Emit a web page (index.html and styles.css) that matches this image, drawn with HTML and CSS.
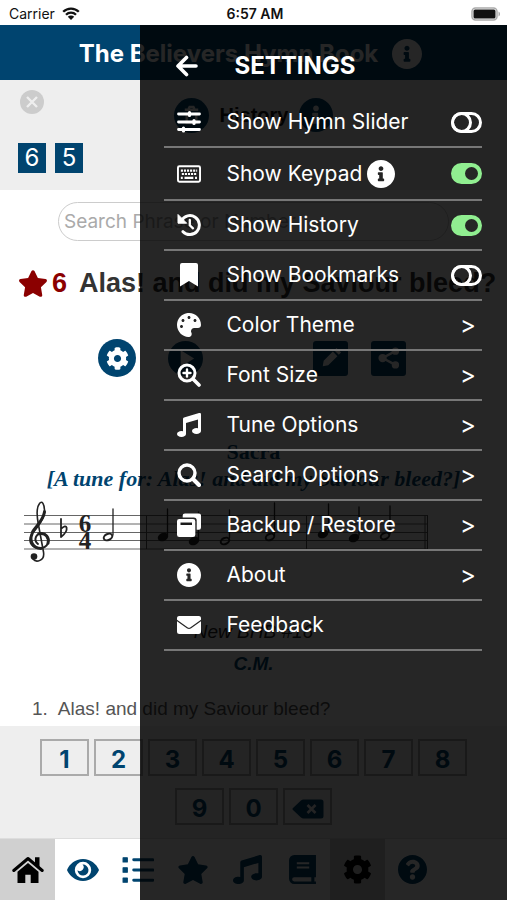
FILE: index.html
```html
<!DOCTYPE html>
<html lang="en">
<head>
<meta charset="utf-8">
<meta name="viewport" content="width=device-width, initial-scale=1">
<title>The Believers Hymn Book</title>
<link rel="stylesheet" href="styles.css">
</head>
<body>
<svg class="sprite" aria-hidden="true">
  <symbol id="cog" viewBox="0 0 512 512"><path d="M487.4 315.7l-42.6-24.6c4.3-23.2 4.3-47 0-70.2l42.6-24.6c4.9-2.8 7.1-8.6 5.5-14-11.1-35.6-30-67.8-54.7-94.6-3.8-4.1-10-5.1-14.8-2.3L380.8 110c-17.9-15.4-38.5-27.3-60.8-35.1V25.8c0-5.6-3.9-10.5-9.4-11.7-36.7-8.2-74.3-7.8-109.2 0-5.5 1.2-9.4 6.1-9.4 11.7V75c-22.2 7.9-42.8 19.8-60.8 35.1L88.7 85.5c-4.9-2.8-11-1.9-14.8 2.3-24.7 26.7-43.6 58.9-54.7 94.6-1.7 5.4.6 11.2 5.5 14L67.3 221c-4.3 23.2-4.3 47 0 70.2l-42.6 24.6c-4.9 2.8-7.1 8.6-5.5 14 11.1 35.6 30 67.8 54.7 94.6 3.8 4.1 10 5.1 14.8 2.3l42.6-24.6c17.9 15.4 38.5 27.3 60.8 35.1v49.2c0 5.6 3.9 10.5 9.4 11.7 36.7 8.2 74.3 7.8 109.2 0 5.5-1.2 9.4-6.1 9.4-11.7v-49.2c22.2-7.9 42.8-19.8 60.8-35.1l42.6 24.6c4.9 2.8 11 1.9 14.8-2.3 24.7-26.7 43.6-58.9 54.7-94.6 1.5-5.5-.7-11.3-5.6-14.1zM256 336c-44.1 0-80-35.9-80-80s35.9-80 80-80 80 35.9 80 80-35.9 80-80 80z"/></symbol>
  <symbol id="star" viewBox="0 0 576 512"><path d="M259.3 17.8L194 150.2 47.9 171.5c-26.2 3.8-36.7 36.1-17.7 54.6l105.7 103-25 145.5c-4.5 26.3 23.2 46 46.4 33.7L288 439.6l130.7 68.7c23.2 12.2 50.9-7.4 46.4-33.7l-25-145.5 105.7-103c19-18.5 8.5-50.8-17.7-54.6L382 150.2 316.7 17.8c-11.7-23.6-45.6-23.9-57.4 0z"/></symbol>
  <symbol id="info" viewBox="8 8 496 496"><path d="M256 8C119.043 8 8 119.083 8 256c0 136.997 111.043 248 248 248s248-111.003 248-248C504 119.083 392.957 8 256 8zm0 110c23.196 0 42 18.804 42 42s-18.804 42-42 42-42-18.804-42-42 18.804-42 42-42zm56 254c0 6.627-5.373 12-12 12h-88c-6.627 0-12-5.373-12-12v-24c0-6.627 5.373-12 12-12h12v-64h-12c-6.627 0-12-5.373-12-12v-24c0-6.627 5.373-12 12-12h64c6.627 0 12 5.373 12 12v100h12c6.627 0 12 5.373 12 12v24z"/></symbol>
  <symbol id="help" viewBox="8 8 496 496"><path d="M504 256c0 136.997-111.043 248-248 248S8 392.997 8 256C8 119.083 119.043 8 256 8s248 111.083 248 248zM262.655 90c-54.497 0-89.255 22.957-116.549 63.758-3.536 5.286-2.353 12.415 2.715 16.258l34.699 26.31c5.205 3.947 12.621 3.008 16.665-2.122 17.864-22.658 30.113-35.797 57.303-35.797 20.429 0 45.698 13.148 45.698 32.958 0 14.976-12.363 22.667-32.534 33.976C247.128 238.528 216 254.941 216 296v4c0 6.627 5.373 12 12 12h56c6.627 0 12-5.373 12-12v-1.333c0-28.462 83.186-29.647 83.186-106.667 0-58.002-60.165-102-116.531-102zM256 338c-25.365 0-46 20.635-46 46 0 25.364 20.635 46 46 46s46-20.636 46-46c0-25.365-20.635-46-46-46z"/></symbol>
  <symbol id="music" viewBox="0 0 512 512"><path d="M470.38 1.51L150.41 96A32 32 0 0 0 128 126.51v261.41A139 139 0 0 0 96 384c-53 0-96 28.66-96 64s43 64 96 64 96-28.66 96-64V214.32l256-75v184.61a138.4 138.4 0 0 0-32-3.93c-53 0-96 28.66-96 64s43 64 96 64 96-28.65 96-64V32a32 32 0 0 0-41.62-30.49z"/></symbol>
  <symbol id="palette" viewBox="0 0 512 512"><path d="M204.3 5C104.9 24.4 24.8 104.3 5.2 203.4c-37 187 131.7 326.4 258.8 306.7 41.2-6.4 61.4-54.6 42.5-91.7-23.1-45.4 9.9-98.4 60.9-98.4h79.7c35.8 0 64.8-29.6 64.9-65.3C511.5 97.1 368.1-26.9 204.3 5zM96 320c-17.7 0-32-14.3-32-32s14.3-32 32-32 32 14.3 32 32-14.3 32-32 32zm32-128c-17.7 0-32-14.3-32-32s14.3-32 32-32 32 14.3 32 32-14.3 32-32 32zm128-64c-17.7 0-32-14.3-32-32s14.3-32 32-32 32 14.3 32 32-14.3 32-32 32zm128 64c-17.7 0-32-14.3-32-32s14.3-32 32-32 32 14.3 32 32-14.3 32-32 32z"/></symbol>
  <symbol id="bookmark" viewBox="0 0 24 24"><path d="M3 2a2 2 0 0 1 2-2h14a2 2 0 0 1 2 2V23.500L12 18 3 23.500z"/></symbol>
  <symbol id="sliders" viewBox="0 0 24 24"><path d="M1.500 4h21M1.500 12h21M1.500 19.500h21" stroke="currentColor" stroke-width="2.800" stroke-linecap="round"/><path d="M12.500 2.500v3M17 10.500v3M6.500 18v3" stroke="currentColor" stroke-width="3.200" stroke-linecap="round"/></symbol>
  <symbol id="keyboard" viewBox="0.500 1 25 18"><rect x="1.500" y="2" width="23" height="16" rx="1.500" fill="none" stroke="currentColor" stroke-width="2"/><path d="M4.500 6.500h17M5.500 10h15.500" stroke="currentColor" stroke-width="2.200" stroke-dasharray="2.200 1"/><path d="M4.500 14h2M8.300 14h9.200M19.300 14h2" stroke="currentColor" stroke-width="2.200"/></symbol>
  <symbol id="history" viewBox="0 0 24 24"><path d="M4.500 7.500A9.500 9.500 0 1 1 6 18.700" fill="none" stroke="currentColor" stroke-width="3" stroke-linecap="round"/><path d="M1 1.500v8.700h8.700z" stroke="currentColor" stroke-linejoin="round"/><path d="M12.800 7v5.300l3.200 3" fill="none" stroke="currentColor" stroke-width="2.300" stroke-linecap="round"/></symbol>
  <symbol id="zoom-in" viewBox="0 0 24 24"><circle cx="10" cy="10" r="8" fill="none" stroke="currentColor" stroke-width="3"/><path d="M16 16l6 6" stroke="currentColor" stroke-width="3.600" stroke-linecap="round"/><path d="M10 6.500v7M6.500 10h7" stroke="currentColor" stroke-width="2.400" stroke-linecap="round"/></symbol>
  <symbol id="search" viewBox="0 0 24 24"><circle cx="10" cy="10" r="8" fill="none" stroke="currentColor" stroke-width="3.400"/><path d="M16 16l6 6" stroke="currentColor" stroke-width="4" stroke-linecap="round"/></symbol>
  <symbol id="restore" viewBox="0 0 24 24"><path d="M8 .500h13.500A2.300 2.300 0 0 1 24 3v11.500a2.300 2.300 0 0 1-2.500 2.300H19.700V7.500a3 3 0 0 0-3-3H5.700V3A2.300 2.300 0 0 1 8 .500z"/><path fill-rule="evenodd" d="M2.300 6h13.700a2.300 2.300 0 0 1 2.300 2.300V21.700a2.300 2.300 0 0 1-2.300 2.300H2.300a2.300 2.300 0 0 1-2.300-2.300V8.300a2.300 2.300 0 0 1 2.300-2.300zM3.500 9.500v2.500h11.500V9.500z"/></symbol>
  <symbol id="mail" viewBox="0 0 24 24"><path d="M2.500 3h19A2.300 2.300 0 0 1 24 5.500v1.300l-10.500 7.500a2.500 2.500 0 0 1-3 0L0 6.800V5.500A2.300 2.300 0 0 1 2.500 3z"/><path d="M0 8.300l9.800 7a3.800 3.800 0 0 0 4.400 0L24 8.300v10.200A2.500 2.500 0 0 1 21.500 21h-19A2.500 2.500 0 0 1 0 18.500z"/></symbol>
  <symbol id="back" viewBox="0 0 22 22"><path d="M20 11H3M10.500 2.500L2 11l8.500 8.500" fill="none" stroke="currentColor" stroke-width="3.600" stroke-linecap="round" stroke-linejoin="round"/></symbol>
  <symbol id="home" viewBox="0 0 32 28"><path d="M1.800 14.500L16 2.500l14.200 12" fill="none" stroke="currentColor" stroke-width="3" stroke-linecap="round" stroke-linejoin="round"/><path d="M23 1.200h4.500V12L23 8z"/><path d="M5.500 15.800L16 7l10.500 8.800V27h-7.800v-8.300h-5.400V27H5.500z"/></symbol>
  <symbol id="eye" viewBox="0 0 32 24"><path fill-rule="evenodd" d="M16 1C8 1 2.500 6.500.3 11.200a2 2 0 0 0 0 1.600C2.500 17.500 8 23 16 23s13.500-5.500 15.700-10.200a2 2 0 0 0 0-1.600C29.500 6.500 24 1 16 1zm0 2.800a8.200 8.200 0 1 1 0 16.400 8.200 8.200 0 0 1 0-16.400z"/><path d="M15.500 6.600a5.500 5.500 0 1 1-5 5.700 3.800 3.800 0 0 0 5-5.700z"/></symbol>
  <symbol id="list" viewBox="0 0 30 26"><path d="M1 1.500h4v4H1zM1 11h4v4H1zM1 20.500h4v4H1z" stroke="currentColor" stroke-linejoin="round"/><path d="M11 3.500h18M11 13h18M11 22.500h18" stroke="currentColor" stroke-width="2.800" stroke-linecap="round"/></symbol>
  <symbol id="book" viewBox="0 0 26 28"><path fill-rule="evenodd" d="M5 0h21v21.500h-1.500v4H26V28H5a5 5 0 0 1-5-5V5a5 5 0 0 1 5-5zM5 21.500a2 2 0 0 0 0 4h16.500v-4zM7.500 7v2h12V7zm0 4v2h12v-2z"/></symbol>
  <symbol id="delete" viewBox="0 0 32 20"><path fill-rule="evenodd" d="M1 9L9 1.500A4 4 0 0 1 12 .5h17A2.500 2.500 0 0 1 31.500 3v14a2.500 2.500 0 0 1-2.500 2.500H12a4 4 0 0 1-3-1L1 11a1.400 1.400 0 0 1 0-2z"/><path d="M15.500 6l8 8m0-8l-8 8" stroke="#eee" stroke-width="2.600"/></symbol>
</svg>

<div class="app">
  <div class="status">
    <span class="carrier">Carrier
      <svg class="wifi" viewBox="0 0 18 13"><path d="M1.200 4.800a11 11 0 0 1 15.600 0M4 7.800a7 7 0 0 1 10 0" fill="none" stroke="currentColor" stroke-width="2.300"/><path d="M5.800 9.700a4.600 4.600 0 0 1 6.400 0L9 13z"/></svg>
    </span>
    <time>6:57 AM</time>
    <svg class="battery" viewBox="0 0 30 14"><rect x="1" y="1" width="25" height="12" rx="3.500" fill="#fff" stroke="#aaa" stroke-width="1.500"/><rect x="2.500" y="2.500" width="22" height="9" rx="1.500"/><path d="M27.500 4.500c2 .8 2 4.200 0 5z" fill="#aaa"/></svg>
  </div>

  <header class="titlebar">
    <h1>The Believers Hymn Book</h1>
    <button class="plain" aria-label="About this book"><svg class="i30"><use href="#info"/></svg></button>
  </header>

  <section class="recent">
    <div class="recent-head">
      <button class="close" aria-label="Close history"><svg viewBox="0 0 24 24"><circle cx="12" cy="12" r="12" fill="#ccc"/><path d="M7 7l10 10M17 7L7 17" stroke="#eee" stroke-width="2.400"/></svg></button>
      <div class="recent-title">
        <button class="round small" aria-label="Clear history"><svg viewBox="0 0 24 24"><path d="M5 6h14M9 5l1-2h4l1 2M7 9v11h10V9" fill="none" stroke="currentColor" stroke-width="2.500"/></svg></button>
        <h2>History</h2>
        <button class="plain navy" aria-label="About history"><svg class="i34"><use href="#info"/></svg></button>
      </div>
    </div>
    <div class="chips"><a href="#h6">6</a><a href="#h5">5</a></div>
  </section>

  <main class="hymn">
    <input class="search" type="search" aria-label="Search" placeholder="Search Phrase or Number">
    <h2 class="hymn-title"><svg class="fav"><use href="#star"/></svg><span class="num">6</span><span>Alas! and did my Saviour bleed?</span></h2>
    <div class="tools">
      <button class="round" aria-label="Options"><svg><use href="#cog"/></svg></button>
      <button class="round small play" aria-label="Play"><svg viewBox="0 0 24 24"><path d="M7 3.500l14 8.500-14 8.500z"/></svg></button>
      <button class="square" aria-label="Edit"><svg viewBox="0 0 24 24"><path d="M3 21l1-6L14 5l5 5L9 20zM15.500 3.500L18 1l5 5-2.500 2.500z"/></svg></button>
      <button class="square" aria-label="Share"><svg viewBox="0 0 24 24"><path d="M19 4.500L5 12l14 7.500" fill="none" stroke="currentColor" stroke-width="2.600"/><circle cx="19" cy="4.500" r="4"/><circle cx="5" cy="12" r="4.500"/><circle cx="19" cy="19.500" r="4"/></svg></button>
    </div>
    <h3 class="tune">Sacra</h3>
    <p class="tune-for">[A tune for: Alas! and did my Saviour bleed?]</p>
    <svg class="score" viewBox="0 0 404 72" role="img" aria-label="First line of the tune">
      <path d="M0 17.500h404M0 26h404M0 34.500h404M0 42.500h404M0 51h404" stroke="#666" stroke-width="1"/>
      <path d="M122.500 17.500v33.500M282.500 17.500v33.500M401 17.500v33.500M403.500 17.500v33.500" stroke="#555"/>
      <g fill="none" stroke="#222" stroke-linecap="round">
        <path d="M14 46C9 42 12 35 18 35.500c8 1 9 13-.5 14.500C8 51 4 44 7.500 37 11 30 20 24 20.500 13" stroke-width="2"/>
        <path d="M8 36C5 43 9 50 17 50.500M15 35.800c7-1.500 10.500 4 9 9.500M20.500 14C19 23 12 28 8.500 34" stroke-width="3"/>
        <path d="M20.500 13C20.500 6 18 2 15.500 5.500 12 10 12.500 17 14.500 27L19.500 54C21 63 12 65 9 61" stroke-width="1.600"/>
        <path d="M37 21v18M37 31c6-7 9 1 0 8" stroke-width="1.800"/>
        <path d="M89 37V11M143.500 37V11M174.500 42V14M205.500 40V12M250.500 38V5M304.500 34V6M335 37V9M366 36V8" stroke-width="1.300"/>
        <g stroke-width="2"><ellipse cx="84" cy="39" rx="4.500" ry="3" transform="rotate(-25 84 39)"/><ellipse cx="201" cy="43" rx="4.500" ry="3" transform="rotate(-25 201 43)"/><ellipse cx="246" cy="39" rx="4.500" ry="3" transform="rotate(-25 246 39)"/><ellipse cx="361" cy="38" rx="4.500" ry="3" transform="rotate(-25 361 38)"/></g>
      </g>
      <g fill="#222"><circle cx="10" cy="58.500" r="3.300"/><ellipse cx="139" cy="39" rx="5.500" ry="4" transform="rotate(-25 139 39)"/><ellipse cx="170" cy="43" rx="5.500" ry="4" transform="rotate(-25 170 43)"/><ellipse cx="299" cy="36" rx="5.500" ry="4" transform="rotate(-25 299 36)"/><ellipse cx="330" cy="40" rx="5.500" ry="4" transform="rotate(-25 330 40)"/></g>
      <g class="meter" text-anchor="middle"><text x="61" y="34">6</text><text x="61" y="51">4</text></g>
    </svg>
    <p class="source">New BHB #16</p>
    <p class="metre">C.M.</p>
    <p class="verse"><span>1.</span><span>Alas! and did my Saviour bleed?</span></p>
  </main>

  <div class="keypad">
    <div class="keys"><button>1</button><button>2</button><button>3</button><button>4</button><button>5</button><button>6</button><button>7</button><button>8</button></div>
    <div class="keys"><button>9</button><button>0</button><button aria-label="Delete"><svg><use href="#delete"/></svg></button></div>
  </div>

  <nav class="tabs">
    <a class="on" href="#home" aria-label="Home"><svg><use href="#home"/></svg></a>
    <a href="#view" aria-label="View"><svg><use href="#eye"/></svg></a>
    <a href="#list" aria-label="Index"><svg><use href="#list"/></svg></a>
    <a href="#fav" aria-label="Favourites"><svg><use href="#star"/></svg></a>
    <a href="#tunes" aria-label="Tunes"><svg class="mid"><use href="#music"/></svg></a>
    <a href="#book" aria-label="Books"><svg class="mid"><use href="#book"/></svg></a>
    <a class="on" href="#settings" aria-label="Settings"><svg class="mid"><use href="#cog"/></svg></a>
    <a href="#help" aria-label="Help"><svg class="mid"><use href="#help"/></svg></a>
  </nav>

  <aside class="drawer">
    <div class="drawer-head">
      <button class="plain" aria-label="Back"><svg class="back"><use href="#back"/></svg></button>
      <h2>SETTINGS</h2>
    </div>
    <ul class="menu">
      <li><svg><use href="#sliders"/></svg><label for="t1">Show Hymn Slider</label><input id="t1" type="checkbox"></li>
      <li class="tall"><svg><use href="#keyboard"/></svg><label for="t2">Show Keypad</label><button class="plain hint" aria-label="About the keypad"><svg><use href="#info"/></svg></button><input id="t2" type="checkbox" checked></li>
      <li><svg><use href="#history"/></svg><label for="t3">Show History</label><input id="t3" type="checkbox" checked></li>
      <li><svg><use href="#bookmark"/></svg><label for="t4">Show Bookmarks</label><input id="t4" type="checkbox"></li>
      <li><svg><use href="#palette"/></svg><a href="#theme">Color Theme<span>&gt;</span></a></li>
      <li><svg><use href="#zoom-in"/></svg><a href="#font">Font Size<span>&gt;</span></a></li>
      <li><svg><use href="#music"/></svg><a href="#tune">Tune Options<span>&gt;</span></a></li>
      <li><svg><use href="#search"/></svg><a href="#search-options">Search Options<span>&gt;</span></a></li>
      <li><svg><use href="#restore"/></svg><a href="#backup">Backup / Restore<span>&gt;</span></a></li>
      <li><svg><use href="#info"/></svg><a href="#about">About<span>&gt;</span></a></li>
      <li><svg><use href="#mail"/></svg><a href="#feedback">Feedback</a></li>
    </ul>
  </aside>
</div>
</body>
</html>
```
FILE: styles.css
```css
:root {
  --navy: #00446f;
  --panel: #eee;
  --ui: Inter, Roboto, sans-serif;
  --body: "Liberation Sans", Arial, sans-serif;
}

*, *::before { box-sizing: border-box; }

body, h1, h2, h3, p, ul { margin: 0; padding: 0; }

body {
  background: #fff;
  color: #333;
  font-family: var(--body);
}

button { padding: 0; border: 0; font: inherit; }
a { color: inherit; text-decoration: none; }
svg { display: block; fill: currentColor; }
.sprite { position: absolute; width: 0; height: 0; }

.app {
  position: relative;
  display: flex;
  flex-direction: column;
  min-height: 100vh;
}

.status {
  display: grid;
  grid-template-columns: 1fr auto 1fr;
  align-items: center;
  height: 25px;
  padding: 2px 6px 0 9px;
  color: #111;
  font: 400 14px/20px var(--ui);
}
.status time { font-weight: 600; }
.carrier { display: flex; align-items: center; gap: 7px; }
.wifi { width: 18px; height: 13px; }
.battery { width: 30px; height: 14px; justify-self: end; }

.titlebar {
  display: flex;
  align-items: center;
  justify-content: center;
  gap: 14px;
  height: 55px;
  padding: 2px 6px 0 0;
  background: var(--navy);
  color: #fff;
}
.titlebar h1 { font: 700 24px/30px var(--ui); }

.plain { background: none; color: inherit; }
.navy { color: var(--navy); }
.i30 { width: 30px; height: 30px; }
.i34 { width: 34px; height: 34px; }

.recent {
  height: 110px;
  padding: 10px 18px 0;
  background: var(--panel);
}
.recent-head {
  display: grid;
  grid-template-columns: 1fr auto 1fr;
  height: 53px;
}
.close { width: 24px; height: 24px; margin-left: 2px; background: none; }
.close svg { width: 24px; height: 24px; }
.recent-title { display: flex; align-items: center; align-self: start; height: 50px; gap: 11px; color: #111; }
.recent-title h2 { font: 700 20px/24px var(--body); }
.chips { display: flex; gap: 9px; }
.chips a {
  width: 28px;
  background: var(--navy);
  color: #fff;
  font: 400 24px/30px var(--ui);
  text-align: center;
}

.round {
  display: grid;
  place-items: center;
  width: 38px;
  height: 38px;
  border-radius: 50%;
  background: var(--navy);
  color: #fff;
}
.small { width: 35px; height: 35px; }
.round svg { width: 23px; height: 23px; }
.square {
  display: grid;
  place-items: center;
  width: 35px;
  height: 35px;
  border-radius: 3px;
  background: var(--navy);
  color: #fff;
}
.square svg { width: 22px; height: 22px; }

.hymn {
  display: flex;
  flex-direction: column;
  align-items: center;
  flex: 1;
  padding-top: 12px;
}
.search {
  width: calc(100% - 116px);
  height: 39px;
  padding: 0 5px;
  border: 1px solid #ccc;
  border-radius: 20px;
  background: #fff;
  font: 400 19px/24px var(--ui);
}
.search::placeholder { color: #aaa; }
.hymn-title {
  display: flex;
  align-items: center;
  align-self: flex-start;
  margin: 26px 0 0 18px;
  color: #333;
  font: 700 27px/32px var(--body);
  white-space: nowrap;
}
.fav { width: 30px; height: 27px; color: #8b0000; }
.num { margin: 0 12px 0 4px; color: #8b0000; }
.tools {
  display: flex;
  align-items: center;
  gap: 23px;
  margin: 40px 3px 0 0;
}
.play { margin: 0 87px 0 9px; }
.tune {
  margin-top: 61px;
  color: var(--navy);
  font: 700 22px/28px "Liberation Serif", "Times New Roman", serif;
}
.tune-for {
  color: var(--navy);
  font: italic 700 22px/26px "Liberation Serif", "Times New Roman", serif;
}
.score { align-self: flex-start; width: 404px; height: 72px; margin: 6px 0 0 24px; }
.meter { fill: #222; font: 700 25px "Liberation Serif", serif; }
.source { margin-top: 50px; color: #222; font: italic 400 19px/24px var(--body); }
.metre { margin-top: 8px; color: var(--navy); font: italic 700 19px/24px var(--body); }
.verse {
  display: flex;
  gap: 10px;
  align-self: flex-start;
  margin: 20px 0 0 32px;
  color: #555;
  font: 400 19px/26px var(--body);
}

.keypad {
  display: flex;
  flex-direction: column;
  gap: 12px;
  padding: 13px 0;
  border-bottom: 1px solid #ddd;
  background: var(--panel);
}
.keys { display: flex; justify-content: center; gap: 5px; }
.keys button {
  display: grid;
  place-items: center;
  width: 49px;
  height: 37px;
  padding-top: 4px;
  border: 2px solid #aaa;
  background: var(--panel);
  color: var(--navy);
  font: 700 24px/28px var(--ui);
}
.keys svg { width: 32px; height: 20px; }

.tabs { display: flex; height: 61px; background: #fff; color: var(--navy); }
.tabs a { display: grid; place-items: center; width: 55px; }
.tabs .on { background: #d0d0d0; color: #000; }
.tabs svg { width: 32px; height: 28px; }
.tabs .mid { width: 29px; height: 29px; }

.drawer {
  position: absolute;
  top: 25px;
  right: 0;
  bottom: 0;
  width: 72.3%;
  padding: 23px 25px 0 24px;
  background: rgba(0, 0, 0, .85);
  color: #fff;
}
.drawer-head {
  display: flex;
  align-items: center;
  gap: 36px;
  height: 50px;
  padding: 0 0 14px 12px;
}
.drawer-head h2 { font: 700 24px/30px var(--ui); }
.back { width: 22px; height: 22px; }

.menu { list-style: none; font: 400 21px/28px var(--ui); }
.menu li {
  display: flex;
  align-items: center;
  height: 50px;
  border-bottom: 2px solid #777;
}
.menu .tall { height: 53px; }
.menu li > svg { flex: none; width: 24px; height: 24px; margin: 0 25px 0 13px; }
.menu a { display: flex; flex: 1; justify-content: space-between; padding-right: 6px; }
.menu a span { font-size: 24px; }
.hint { margin-left: 5px; }
.hint svg { width: 28px; height: 28px; }

.menu input {
  position: relative;
  width: 31px;
  height: 21px;
  margin: 0 0 0 auto;
  border: 3px solid #fff;
  border-radius: 11px;
  appearance: none;
}
.menu input::before {
  content: "";
  position: absolute;
  top: -3px;
  left: -3px;
  width: 21px;
  height: 21px;
  border: 3px solid #fff;
  border-radius: 50%;
}
.menu input:checked { border-color: #90ee90; background: #90ee90; }
.menu input:checked::before {
  top: 1px;
  left: 11px;
  width: 13px;
  height: 13px;
  border: 0;
  background: #262626;
}
```
